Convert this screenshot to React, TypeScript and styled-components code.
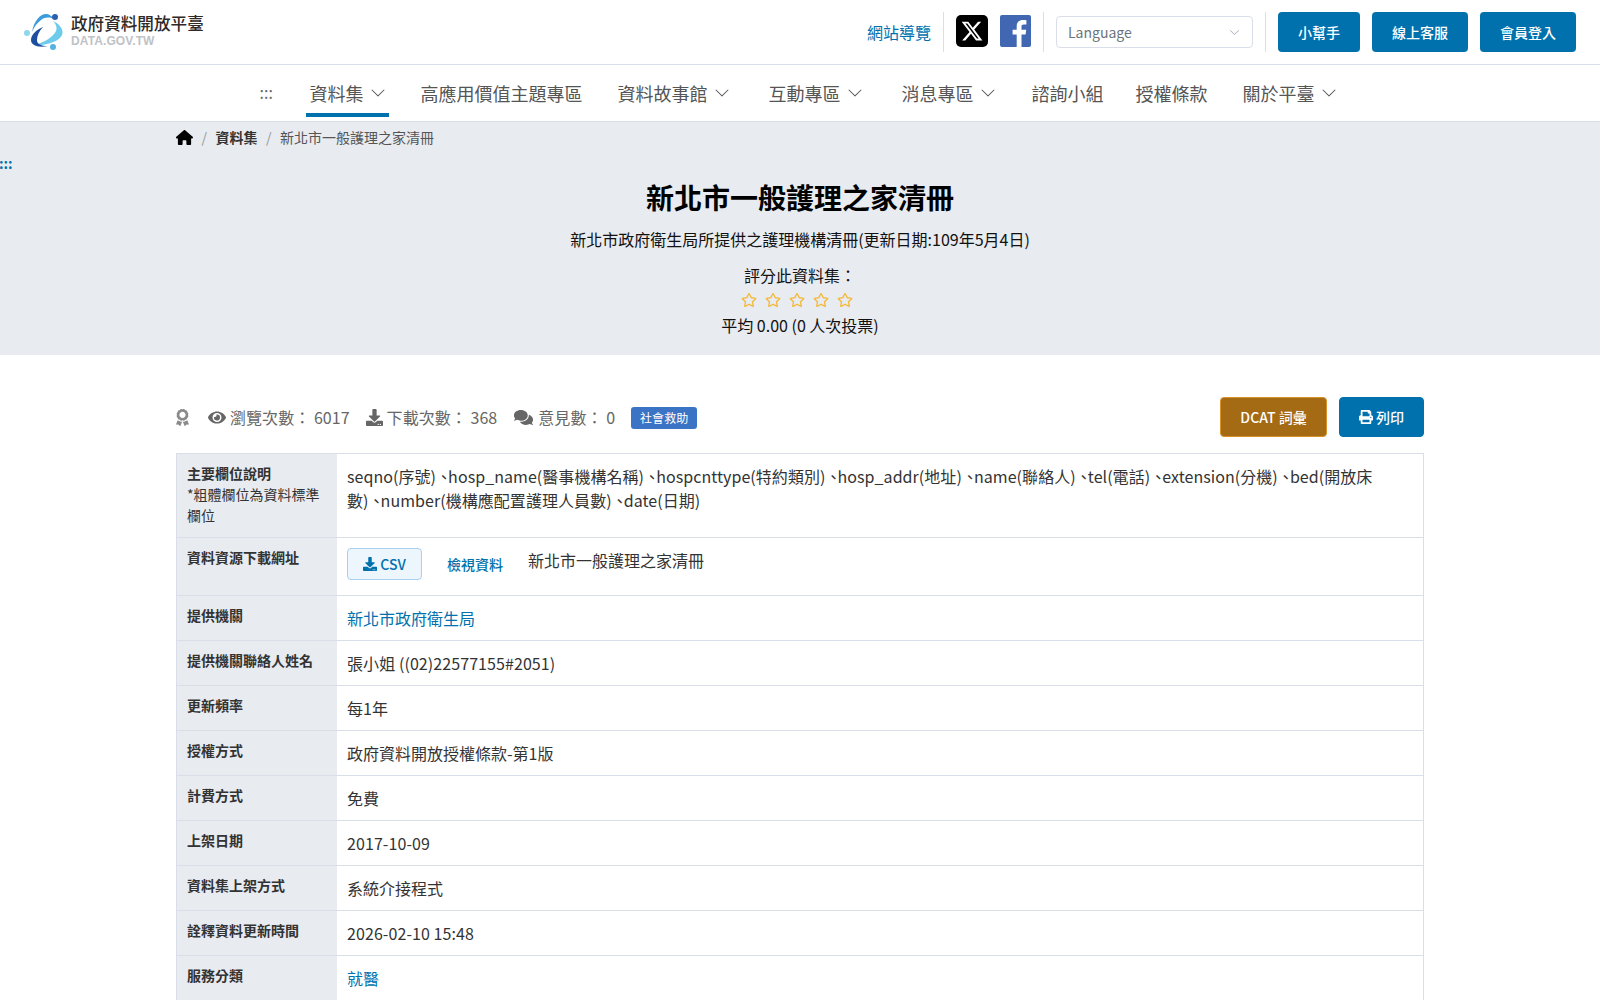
import React from 'react';
import styled, { createGlobalStyle } from 'styled-components';
import { BsChevronDown } from 'react-icons/bs';
import { FaAward, FaComments, FaDownload, FaEye, FaPrint, FaRegStar } from 'react-icons/fa';
import { FaHouse } from 'react-icons/fa6';

const GlobalStyle = createGlobalStyle`
  html, body {
    margin: 0;
    padding: 0;
    background: #fff;
    color: #212529;
    font-family: "Noto Sans CJK TC", "Noto Sans", sans-serif;
    font-size: 16px;
    line-height: 1.5;
  }
  * {
    box-sizing: border-box;
  }
`;

const blue = '#0071ad';

const TopBar = styled.header`
  height: 65px;
  padding: 12px 24px 0;
  display: flex;
  justify-content: space-between;
  align-items: flex-start;
  border-bottom: 1px solid #dadee8;
`;

const Logo = styled.a`
  display: flex;
  align-items: flex-start;
  gap: 7px;
  margin-top: 1px;
`;

const LogoWords = styled.div`
  display: flex;
  flex-direction: column;
`;

const LogoTitle = styled.span`
  font-size: 16.6px;
  line-height: 20px;
  font-weight: 500;
  color: #2f2a28;
  white-space: nowrap;
`;

const LogoDomain = styled.span`
  margin-top: 1px;
  font-family: "Liberation Sans", sans-serif;
  font-size: 12px;
  line-height: 14px;
  font-weight: 700;
  color: #c0c2c6;
  letter-spacing: 0.1px;
`;

const TopRight = styled.div`
  display: flex;
  align-items: center;
  height: 40px;
`;

const GuideLink = styled.a`
  color: ${blue};
  font-size: 16px;
  padding-right: 12px;
`;

const TopDivider = styled.span`
  width: 1px;
  height: 40px;
  background: #dadee8;
`;

const Socials = styled.div`
  display: flex;
  align-items: center;
  gap: 12px;
  padding: 0 12px;
  margin-top: -2px;
`;

const LanguageSelect = styled.div`
  width: 197px;
  height: 32px;
  margin: 0 12px;
  padding: 0 12px 0 11px;
  display: flex;
  align-items: center;
  justify-content: space-between;
  border: 1px solid #dadee8;
  border-radius: 4px;
  color: #6c757d;
  font-size: 14px;
  svg {
    width: 11px;
    height: 11px;
    color: #a5abb5;
  }
`;

const TopButtons = styled.div`
  display: flex;
  gap: 12px;
  margin-left: 12px;
`;

const TopButton = styled.button<{ $width: number }>`
  width: ${(p) => p.$width}px;
  height: 40px;
  border: 0;
  border-radius: 4px;
  background: ${blue};
  color: #fff;
  font: 500 14px "Noto Sans CJK TC", sans-serif;
`;

const Nav = styled.nav`
  height: 57px;
  display: flex;
  justify-content: center;
  align-items: flex-start;
  border-bottom: 1px solid #dadee8;
`;

const NavDots = styled.span`
  width: 14px;
  margin-right: 32px;
  color: #666;
  font-size: 16px;
  line-height: 1;
  padding-top: 19px;
  white-space: nowrap;
`;

const NavItem = styled.a<{ $active?: boolean; $after: number }>`
  display: flex;
  align-items: center;
  gap: 6px;
  height: 52px;
  margin-right: ${(p) => p.$after}px;
  padding: 8px ${(p) => (p.$active ? 3 : 4)}px 0 4px;
  color: #555;
  font-size: 18px;
  border-bottom: 4px solid ${(p) => (p.$active ? blue : 'transparent')};
  svg {
    width: 16px;
    height: 16px;
  }
`;

const Hero = styled.section`
  height: 233px;
  background: #e8ebf0;
  text-align: center;
`;

const Breadcrumb = styled.div`
  width: 1248px;
  margin: 0 auto;
  height: 30px;
  display: flex;
  align-items: center;
  font-size: 14px;
  color: #555;
  svg {
    width: 17px;
    height: 17px;
    color: #000;
  }
`;

const CrumbSlash = styled.span`
  color: #999;
  margin: 0 8.5px;
`;

const CrumbStrong = styled.strong`
  color: #333;
  font-weight: 700;
`;

const SkipDots = styled.div`
  height: 22px;
  margin-left: -1px;
  text-align: left;
  color: ${blue};
  font-size: 14px;
  line-height: 22px;
  font-weight: 700;
`;

const HeroTitle = styled.h1`
  margin: 0;
  height: 53px;
  padding-top: 2px;
  font-size: 28px;
  line-height: 42px;
  font-weight: 700;
  color: #000;
`;

const HeroDesc = styled.p`
  margin: 0 0 12px;
  font-size: 16px;
  line-height: 24px;
  color: #111;
`;

const RateLabel = styled.div`
  font-size: 16px;
  line-height: 24px;
  color: #111;
`;

const Stars = styled.div`
  display: flex;
  justify-content: center;
  gap: 8px;
  height: 26px;
  padding: 5px 6px 0 0;
  color: #f4b93a;
  svg {
    width: 16px;
    height: 16px;
  }
`;

const Main = styled.main`
  width: 1248px;
  margin: 0 auto;
`;

const StatsRow = styled.div`
  display: flex;
  align-items: center;
  justify-content: space-between;
  height: 40px;
  margin: 42px 0 16px;
`;

const Stats = styled.div`
  display: flex;
  align-items: center;
  color: #666;
  font-size: 16px;
  letter-spacing: 0.05px;
`;

const Stat = styled.span<{ $gap?: number; $icon?: number; $tint?: string }>`
  display: flex;
  align-items: center;
  gap: 4px;
  margin-right: ${(p) => p.$gap ?? 16}px;
  white-space: nowrap;
  svg {
    width: ${(p) => p.$icon ?? 17}px;
    height: 17px;
    color: ${(p) => p.$tint ?? '#666'};
  }
`;

const Badge = styled.span`
  height: 22px;
  margin-top: 2px;
  padding: 0 9px;
  display: flex;
  align-items: center;
  border-radius: 3px;
  background: #3b74c4;
  color: #fff;
  font-size: 12px;
`;

const Actions = styled.div`
  display: flex;
  gap: 12px;
`;

const ActionButton = styled.button<{ $bg: string; $border: string; $width: number }>`
  width: ${(p) => p.$width}px;
  height: 40px;
  display: flex;
  align-items: center;
  justify-content: center;
  gap: 3px;
  background: ${(p) => p.$bg};
  border: 1px solid ${(p) => p.$border};
  border-radius: 4px;
  color: #fff;
  font: 500 14px "Noto Sans CJK TC", sans-serif;
  svg {
    width: 14px;
    height: 14px;
  }
`;

const InfoTable = styled.div`
  border: 1px solid #dadee8;
  border-bottom: 0;
`;

const Row = styled.div`
  display: grid;
  grid-template-columns: 160px 1fr;
  border-bottom: 1px solid #dadee8;
`;

const RowLabel = styled.div`
  background: #e8ebf0;
  padding: 9px 10px 11px;
  font-size: 14px;
  line-height: 21px;
  color: #333;
`;

const LabelStrong = styled.strong`
  display: block;
  font-weight: 700;
`;

const RowValue = styled.div<{ $latin?: boolean }>`
  padding: 10px;
  min-height: 44px;
  font-size: 16px;
  line-height: 24px;
  color: #333;
  letter-spacing: ${(p) => (p.$latin ? '0.08px' : 'normal')};
`;

const ValueText = styled.div`
  max-width: 1034px;
  letter-spacing: 0.055px;
`;

const FieldName = styled.span``;

const FieldSep = styled.span`
  font-feature-settings: "halt";
  padding-left: 4px;
`;

const ValueLink = styled.a`
  color: ${blue};
`;

const ResourceLine = styled.div`
  display: flex;
  align-items: flex-start;
  height: 37px;
`;

const CsvButton = styled.button`
  width: 75px;
  height: 32px;
  display: flex;
  align-items: center;
  justify-content: center;
  gap: 3px;
  background: #edf5fd;
  border: 1px solid #a8d0ef;
  border-radius: 4px;
  color: ${blue};
  font: 500 14px "Noto Sans CJK TC", sans-serif;
  svg {
    width: 14px;
    height: 14px;
  }
`;

const ViewLink = styled.a`
  color: ${blue};
  font-size: 14px;
  font-weight: 500;
  line-height: 32px;
  margin: 0 25px;
`;

const ResourceName = styled.span`
  line-height: 24px;
`;

function AtomLogo() {
  return (
    <svg width="40" height="38" viewBox="0 0 40 38" fill="none">
      <path d="M10 32C22 33 38 28 38.5 20C39 15 34 10 29 8C33 12 34 17 30 21C26 26 18 30 10 32Z" fill="#6fcbec" />
      <path d="M8 19C10 8 16 1 22 1C25 1 28 3 30 6C25 4 21 4 17 7C13 10 10 14 8 19Z" fill="#3b9bdc" />
      <path d="M19 14C12 17 7 22 7 27C7 32 13 35 24 33C17 33 13 31 13 27C13 23 15 18 19 14Z" fill="#1d4fa0" />
      <circle cx="31" cy="4" r="3" fill="#2c5fae" />
      <circle cx="3" cy="20" r="3" fill="#8fd6ef" />
      <circle cx="29" cy="34" r="3" fill="#54b3e3" />
    </svg>
  );
}

function XBadge() {
  return (
    <svg width="32" height="32" viewBox="0 0 32 32">
      <rect width="32" height="32" rx="5" fill="#000" />
      <path
        transform="translate(4.5 4.5) scale(0.96)"
        fill="#fff"
        d="M18.244 2.25h3.308l-7.227 8.26 8.502 11.24H16.17l-5.214-6.817L4.99 21.75H1.68l7.73-8.835L1.254 2.25H8.08l4.713 6.231zm-1.161 17.52h1.833L7.084 4.126H5.117z"
      />
    </svg>
  );
}

function FacebookBadge() {
  return (
    <svg width="31" height="32" viewBox="0 0 31 32">
      <rect width="31" height="32" rx="2" fill="#4267b2" />
      <path
        fill="#fff"
        d="M21.5 32V19.6h4.1l.6-4.8h-4.7v-3c0-1.4.4-2.3 2.4-2.3h2.5V5.2c-.4-.1-1.9-.2-3.6-.2-3.6 0-6.1 2.2-6.1 6.2v3.6h-4.1v4.8h4.1V32z"
      />
    </svg>
  );
}

const navItems = [
  { label: '資料集', caret: true, active: true, after: 28 },
  { label: '高應用價值主題專區', after: 27 },
  { label: '資料故事館', caret: true, after: 31 },
  { label: '互動專區', caret: true, after: 31 },
  { label: '消息專區', caret: true, after: 28 },
  { label: '諮詢小組', after: 24 },
  { label: '授權條款', after: 27 },
  { label: '關於平臺', caret: true, after: 0 },
];

const fields = [
  'seqno(序號)',
  'hosp_name(醫事機構名稱)',
  'hospcnttype(特約類別)',
  'hosp_addr(地址)',
  'name(聯絡人)',
  'tel(電話)',
  'extension(分機)',
  'bed(開放床數)',
  'number(機構應配置護理人員數)',
  'date(日期)',
];

const plainRows: { label: string; value: string; link?: boolean; latin?: boolean }[] = [
  { label: '提供機關', value: '新北市政府衛生局', link: true },
  { label: '提供機關聯絡人姓名', value: '張小姐 ((02)22577155#2051)', latin: true },
  { label: '更新頻率', value: '每1年' },
  { label: '授權方式', value: '政府資料開放授權條款-第1版' },
  { label: '計費方式', value: '免費' },
  { label: '上架日期', value: '2017-10-09', latin: true },
  { label: '資料集上架方式', value: '系統介接程式' },
  { label: '詮釋資料更新時間', value: '2026-02-10 15:48', latin: true },
  { label: '服務分類', value: '就醫', link: true },
];

export default function App() {
  return (
    <>
      <GlobalStyle />
      <TopBar>
        <Logo>
          <AtomLogo />
          <LogoWords>
            <LogoTitle>政府資料開放平臺</LogoTitle>
            <LogoDomain>DATA.GOV.TW</LogoDomain>
          </LogoWords>
        </Logo>
        <TopRight>
          <GuideLink>網站導覽</GuideLink>
          <TopDivider />
          <Socials>
            <XBadge />
            <FacebookBadge />
          </Socials>
          <TopDivider />
          <LanguageSelect>
            Language
            <BsChevronDown />
          </LanguageSelect>
          <TopDivider />
          <TopButtons>
            <TopButton $width={82}>小幫手</TopButton>
            <TopButton $width={96}>線上客服</TopButton>
            <TopButton $width={96}>會員登入</TopButton>
          </TopButtons>
        </TopRight>
      </TopBar>
      <Nav>
        <NavDots>:::</NavDots>
        {navItems.map((item) => (
          <NavItem key={item.label} $active={item.active} $after={item.after}>
            {item.label}
            {item.caret && <BsChevronDown />}
          </NavItem>
        ))}
      </Nav>
      <Hero>
        <Breadcrumb>
          <FaHouse />
          <CrumbSlash>/</CrumbSlash>
          <CrumbStrong>資料集</CrumbStrong>
          <CrumbSlash>/</CrumbSlash>
          新北市一般護理之家清冊
        </Breadcrumb>
        <SkipDots>:::</SkipDots>
        <HeroTitle>新北市一般護理之家清冊</HeroTitle>
        <HeroDesc>新北市政府衛生局所提供之護理機構清冊(更新日期:109年5月4日)</HeroDesc>
        <RateLabel>評分此資料集：</RateLabel>
        <Stars>
          {[1, 2, 3, 4, 5].map((n) => <FaRegStar key={n} />)}
        </Stars>
        <RateLabel>平均 0.00 (0 人次投票)</RateLabel>
      </Hero>
      <Main>
        <StatsRow>
          <Stats>
            <Stat $icon={13} $gap={19} $tint="#8a8a8a"><FaAward /></Stat>
            <Stat $icon={18}><FaEye />瀏覽次數： 6017</Stat>
            <Stat><FaDownload />下載次數： 368</Stat>
            <Stat $icon={21}><FaComments />意見數： 0</Stat>
            <Badge>社會救助</Badge>
          </Stats>
          <Actions>
            <ActionButton $bg="#a46a14" $border="#d9922a" $width={107}>DCAT 詞彙</ActionButton>
            <ActionButton $bg={blue} $border={blue} $width={85}><FaPrint />列印</ActionButton>
          </Actions>
        </StatsRow>
        <InfoTable>
          <Row>
            <RowLabel>
              <LabelStrong>主要欄位說明</LabelStrong>
              *粗體欄位為資料標準欄位
            </RowLabel>
            <RowValue>
              <ValueText>
                {fields.map((field, index) => (
                  <React.Fragment key={field}>
                    {index > 0 && <FieldSep>、</FieldSep>}
                    <FieldName>{field}</FieldName>
                  </React.Fragment>
                ))}
              </ValueText>
            </RowValue>
          </Row>
          <Row>
            <RowLabel><LabelStrong>資料資源下載網址</LabelStrong></RowLabel>
            <RowValue>
              <ResourceLine>
                <CsvButton><FaDownload />CSV</CsvButton>
                <ViewLink>檢視資料</ViewLink>
                <ResourceName>新北市一般護理之家清冊</ResourceName>
              </ResourceLine>
            </RowValue>
          </Row>
          {plainRows.map((row) => (
            <Row key={row.label}>
              <RowLabel><LabelStrong>{row.label}</LabelStrong></RowLabel>
              <RowValue $latin={row.latin}>
                {row.link ? <ValueLink>{row.value}</ValueLink> : row.value}
              </RowValue>
            </Row>
          ))}
        </InfoTable>
      </Main>
    </>
  );
}
